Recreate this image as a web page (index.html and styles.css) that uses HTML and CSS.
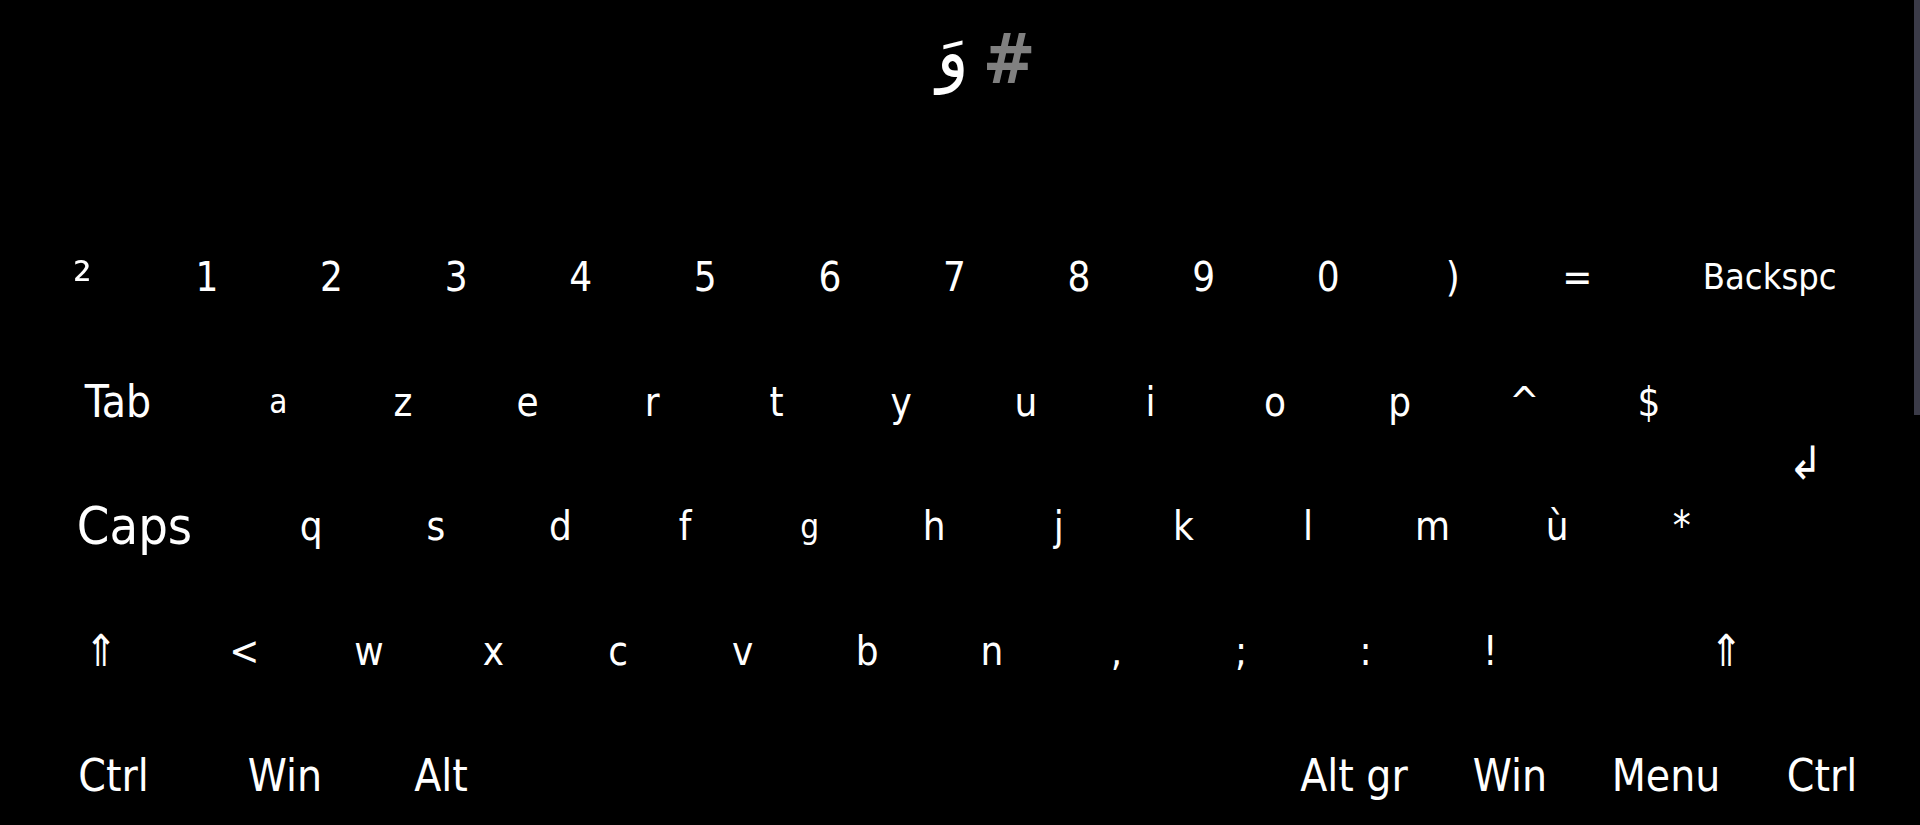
FILE: index.html
```html
<!DOCTYPE html>
<html lang="fr">
<head>
<meta charset="utf-8">
<title>Clavier</title>
<link rel="stylesheet" href="styles.css">
</head>
<body>
<div class="screen">
  <div class="display"><span class="ar">وَ</span><span class="hash">#</span></div>
  <div class="keyboard">
    <div class="row">
      <div class="key u1"><span class="lbl sup">²</span></div>
      <div class="key u1"><span class="lbl">1</span></div>
      <div class="key u1"><span class="lbl">2</span></div>
      <div class="key u1"><span class="lbl">3</span></div>
      <div class="key u1"><span class="lbl">4</span></div>
      <div class="key u1"><span class="lbl">5</span></div>
      <div class="key u1"><span class="lbl">6</span></div>
      <div class="key u1"><span class="lbl">7</span></div>
      <div class="key u1"><span class="lbl">8</span></div>
      <div class="key u1"><span class="lbl">9</span></div>
      <div class="key u1"><span class="lbl">0</span></div>
      <div class="key u1"><span class="lbl">)</span></div>
      <div class="key u1"><span class="lbl">=</span></div>
      <div class="key backspace"><span class="lbl word-sm">Backspc</span></div>
    </div>
    <div class="row">
      <div class="key tab"><span class="lbl word">Tab</span></div>
      <div class="key u1"><span class="lbl small">a</span></div>
      <div class="key u1"><span class="lbl">z</span></div>
      <div class="key u1"><span class="lbl">e</span></div>
      <div class="key u1"><span class="lbl">r</span></div>
      <div class="key u1"><span class="lbl">t</span></div>
      <div class="key u1"><span class="lbl">y</span></div>
      <div class="key u1"><span class="lbl">u</span></div>
      <div class="key u1"><span class="lbl">i</span></div>
      <div class="key u1"><span class="lbl">o</span></div>
      <div class="key u1"><span class="lbl">p</span></div>
      <div class="key u1"><span class="lbl">^</span></div>
      <div class="key u1"><span class="lbl">$</span></div>
      <div class="key enter"><span class="lbl arrow">↲</span></div>
    </div>
    <div class="row">
      <div class="key caps"><span class="lbl word-lg">Caps</span></div>
      <div class="key u1"><span class="lbl">q</span></div>
      <div class="key u1"><span class="lbl">s</span></div>
      <div class="key u1"><span class="lbl">d</span></div>
      <div class="key u1"><span class="lbl">f</span></div>
      <div class="key u1"><span class="lbl small">g</span></div>
      <div class="key u1"><span class="lbl">h</span></div>
      <div class="key u1"><span class="lbl">j</span></div>
      <div class="key u1"><span class="lbl">k</span></div>
      <div class="key u1"><span class="lbl">l</span></div>
      <div class="key u1"><span class="lbl">m</span></div>
      <div class="key u1"><span class="lbl">ù</span></div>
      <div class="key u1"><span class="lbl">*</span></div>
    </div>
    <div class="row">
      <div class="key shift-l"><span class="lbl shift">⇑</span></div>
      <div class="key u1"><span class="lbl">&lt;</span></div>
      <div class="key u1"><span class="lbl">w</span></div>
      <div class="key u1"><span class="lbl">x</span></div>
      <div class="key u1"><span class="lbl">c</span></div>
      <div class="key u1"><span class="lbl">v</span></div>
      <div class="key u1"><span class="lbl">b</span></div>
      <div class="key u1"><span class="lbl">n</span></div>
      <div class="key u1"><span class="lbl">,</span></div>
      <div class="key u1"><span class="lbl">;</span></div>
      <div class="key u1"><span class="lbl">:</span></div>
      <div class="key u1"><span class="lbl">!</span></div>
      <div class="key shift-r"><span class="lbl shift">⇑</span></div>
    </div>
    <div class="row">
      <div class="key ctrl-l"><span class="lbl word">Ctrl</span></div>
      <div class="key mod"><span class="lbl word">Win</span></div>
      <div class="key mod"><span class="lbl word">Alt</span></div>
      <div class="key space"></div>
      <div class="key mod"><span class="lbl word">Alt gr</span></div>
      <div class="key mod"><span class="lbl word">Win</span></div>
      <div class="key mod"><span class="lbl word">Menu</span></div>
      <div class="key mod"><span class="lbl word">Ctrl</span></div>
    </div>
  </div>
  <div class="scrollbar"></div>
</div>
</body>
</html>
```

FILE: styles.css
```css
html, body {
  margin: 0;
  padding: 0;
  background: #000;
}

.screen {
  position: relative;
  width: 1920px;
  height: 825px;
  overflow: hidden;
  background: #000;
  color: #fff;
  font-family: "DejaVu Sans Condensed", "DejaVu Sans", sans-serif;
  font-stretch: condensed;
}

.display {
  height: 215px;
  display: flex;
  justify-content: center;
  align-items: flex-start;
  padding-left: 52px;
  box-sizing: border-box;
}

.ar {
  font-family: "DejaVu Sans", sans-serif;
  font-size: 74px;
  line-height: 1;
  margin-top: 14px;
  margin-right: 14px;
  color: #fff;
}

.hash {
  font-size: 70px;
  font-weight: bold;
  line-height: 1;
  margin-top: 24px;
  color: #808080;
}

.keyboard {
  padding-left: 20px;
  display: flex;
  flex-direction: column;
}

.row {
  display: flex;
  height: 124.6px;
}

.key {
  flex: 0 0 auto;
  display: flex;
  align-items: center;
  justify-content: center;
  height: 100%;
}

.u1 { width: 124.6px; }
.backspace { width: 260px; }
.tab { width: 196px; }
.enter {
  width: 189px;
  align-items: flex-start;
  padding-top: 100px;
  box-sizing: border-box;
  justify-content: center;
}
.caps { width: 229px; }
.shift-l { width: 162px; }
.shift-r { width: 347.4px; }
.ctrl-l { width: 187px; }
.mod { width: 156px; }
.space { width: 757px; }

.lbl {
  display: inline-block;
  font-size: 40px;
  line-height: 1;
}

.lbl.small { font-size: 33px; }
.lbl.sup { font-size: 52px; margin-top: 6px; }
.lbl.word { font-size: 44px; }
.lbl.word-sm { font-size: 36px; }
.lbl.word-lg { font-size: 52px; }
.lbl.arrow { font-size: 46px; }
.lbl.shift { font-size: 44px; }

.scrollbar {
  position: absolute;
  top: 0;
  right: 0;
  width: 6px;
  height: 415px;
  background: #3b3b48;
}
```
